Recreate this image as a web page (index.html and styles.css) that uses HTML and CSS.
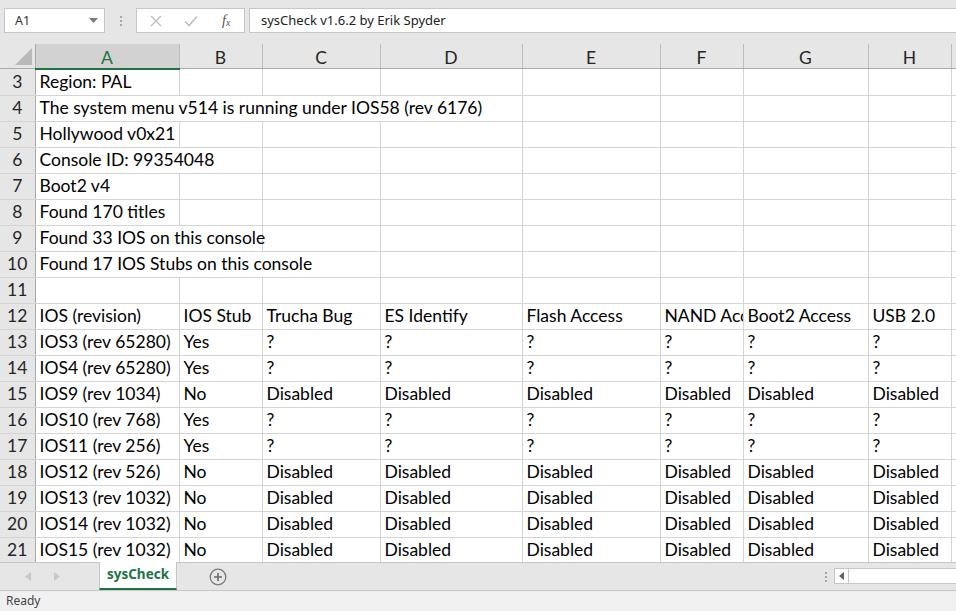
FILE: index.html
```html
<!DOCTYPE html>
<html lang="en">
<head>
  <meta charset="UTF-8" />
  <title>sysCheck - Excel</title>
  <link rel="stylesheet" href="styles.css">
</head>
<body>
  <div class="app">
    <div class="topbar">
      <div class="namebox">
        <span>A1</span>
        <svg class="caret" width="9" height="5" viewBox="0 0 9 5"><path d="M0 0h9L4.5 5z" fill="#7a7a7a"/></svg>
      </div>
      <div class="grip"><i></i><i></i><i></i></div>
      <div class="fxbox">
        <svg width="12" height="12" viewBox="0 0 12 12"><path d="M1 1l10 10M11 1L1 11" stroke="#bdbdbd" stroke-width="1.3" fill="none"/></svg>
        <svg width="14" height="12" viewBox="0 0 14 12"><path d="M1 6.5l4 4L13 1.5" stroke="#bdbdbd" stroke-width="1.6" fill="none"/></svg>
        <span class="fx"><i>f</i><sub>x</sub></span>
      </div>
      <div class="formula">sysCheck v1.6.2 by Erik Spyder</div>
    </div>

    <div class="sheet">
      <table class="grid">
        <colgroup>
          <col style="width:35px"><col style="width:144px"><col style="width:83px"><col style="width:118px">
          <col style="width:142px"><col style="width:138px"><col style="width:83px"><col style="width:125px">
          <col style="width:83px"><col style="width:60px">
        </colgroup>
        <thead>
          <tr>
            <th class="corner"><svg width="17" height="17" viewBox="0 0 17 17"><path d="M17 0v17H0z" fill="#b9b9b9"/></svg></th>
            <th class="sel">A</th><th>B</th><th>C</th><th>D</th><th>E</th><th>F</th><th>G</th><th>H</th><th>I</th>
          </tr>
        </thead>
        <tbody>
          <tr><th>3</th><td>Region: PAL</td><td></td><td></td><td></td><td></td><td></td><td></td><td></td><td></td></tr>
          <tr><th>4</th><td colspan="4">The system menu v514 is running under IOS58 (rev 6176)</td><td></td><td></td><td></td><td></td><td></td></tr>
          <tr><th>5</th><td>Hollywood v0x21</td><td></td><td></td><td></td><td></td><td></td><td></td><td></td><td></td></tr>
          <tr><th>6</th><td colspan="2">Console ID: 99354048</td><td></td><td></td><td></td><td></td><td></td><td></td><td></td></tr>
          <tr><th>7</th><td>Boot2 v4</td><td></td><td></td><td></td><td></td><td></td><td></td><td></td><td></td></tr>
          <tr><th>8</th><td>Found 170 titles</td><td></td><td></td><td></td><td></td><td></td><td></td><td></td><td></td></tr>
          <tr><th>9</th><td colspan="2" class="spill">Found 33 IOS on this console</td><td></td><td></td><td></td><td></td><td></td><td></td><td></td></tr>
          <tr><th>10</th><td colspan="3">Found 17 IOS Stubs on this console</td><td></td><td></td><td></td><td></td><td></td><td></td></tr>
          <tr><th>11</th><td></td><td></td><td></td><td></td><td></td><td></td><td></td><td></td><td></td></tr>
          <tr><th>12</th><td>IOS (revision)</td><td>IOS Stub</td><td>Trucha Bug</td><td>ES Identify</td><td>Flash Access</td><td>NAND Access</td><td>Boot2 Access</td><td>USB 2.0</td><td></td></tr>
          <tr><th>13</th><td>IOS3 (rev 65280)</td><td>Yes</td><td>?</td><td>?</td><td>?</td><td>?</td><td>?</td><td>?</td><td></td></tr>
          <tr><th>14</th><td>IOS4 (rev 65280)</td><td>Yes</td><td>?</td><td>?</td><td>?</td><td>?</td><td>?</td><td>?</td><td></td></tr>
          <tr><th>15</th><td>IOS9 (rev 1034)</td><td>No</td><td>Disabled</td><td>Disabled</td><td>Disabled</td><td>Disabled</td><td>Disabled</td><td>Disabled</td><td></td></tr>
          <tr><th>16</th><td>IOS10 (rev 768)</td><td>Yes</td><td>?</td><td>?</td><td>?</td><td>?</td><td>?</td><td>?</td><td></td></tr>
          <tr><th>17</th><td>IOS11 (rev 256)</td><td>Yes</td><td>?</td><td>?</td><td>?</td><td>?</td><td>?</td><td>?</td><td></td></tr>
          <tr><th>18</th><td>IOS12 (rev 526)</td><td>No</td><td>Disabled</td><td>Disabled</td><td>Disabled</td><td>Disabled</td><td>Disabled</td><td>Disabled</td><td></td></tr>
          <tr><th>19</th><td>IOS13 (rev 1032)</td><td>No</td><td>Disabled</td><td>Disabled</td><td>Disabled</td><td>Disabled</td><td>Disabled</td><td>Disabled</td><td></td></tr>
          <tr><th>20</th><td>IOS14 (rev 1032)</td><td>No</td><td>Disabled</td><td>Disabled</td><td>Disabled</td><td>Disabled</td><td>Disabled</td><td>Disabled</td><td></td></tr>
          <tr><th>21</th><td>IOS15 (rev 1032)</td><td>No</td><td>Disabled</td><td>Disabled</td><td>Disabled</td><td>Disabled</td><td>Disabled</td><td>Disabled</td><td></td></tr>
        </tbody>
      </table>
    </div>

    <div class="tabbar">
      <div class="nav">
        <svg width="6" height="9" viewBox="0 0 6 9"><path d="M6 0v9L0 4.5z" fill="#c8c8c8"/></svg>
        <svg width="6" height="9" viewBox="0 0 6 9"><path d="M0 0v9l6-4.5z" fill="#c8c8c8"/></svg>
      </div>
      <div class="tab">sysCheck</div>
      <div class="addsheet">
        <svg width="18" height="18" viewBox="0 0 18 18"><circle cx="9" cy="9" r="7.8" fill="none" stroke="#7a7a7a" stroke-width="1.3"/><path d="M9 5v8M5 9h8" stroke="#6a6a6a" stroke-width="1.6"/></svg>
      </div>
      <div class="tabspace"></div>
      <div class="grip hgrip"><i></i><i></i><i></i></div>
      <div class="hscroll">
        <div class="hbtn"><svg width="5" height="8" viewBox="0 0 5 8"><path d="M5 0v8L0 4z" fill="#606060"/></svg></div>
      </div>
    </div>

    <div class="statusbar">Ready</div>
  </div>
</body>
</html>
```

FILE: styles.css
```css
body {
  margin: 0;
  background: #fff;
  font-family: 'Noto Sans', 'Open Sans', sans-serif;
  overflow: hidden;
}
.app {
  width: 956px;
  height: 611px;
  display: flex;
  flex-direction: column;
  overflow: hidden;
}
.topbar {
  height: 44px;
  flex: none;
  background: #e6e6e6;
  display: flex;
  align-items: flex-start;
  padding-top: 8px;
  box-sizing: border-box;
}
.namebox {
  margin-left: 4px;
  width: 101px;
  height: 25px;
  box-sizing: border-box;
  background: #fff;
  border: 1px solid #c6c6c6;
  display: flex;
  align-items: center;
  justify-content: space-between;
  padding: 0 6px 0 10px;
  font-size: 12.5px;
  color: #333;
}
.grip {
  width: 31px;
  height: 25px;
  display: flex;
  flex-direction: column;
  align-items: center;
  justify-content: center;
  gap: 2px;
}
.grip i {
  width: 2px;
  height: 2px;
  background: #a8a8a8;
}
.fxbox {
  width: 109px;
  height: 25px;
  box-sizing: border-box;
  background: #fff;
  border: 1px solid #c6c6c6;
  display: flex;
  align-items: center;
  padding: 0 12px 0 13px;
  gap: 22px;
}
.fx {
  font-family: 'Liberation Serif', serif;
  font-size: 14px;
  color: #555;
  margin-left: 2px;
}
.fx sub {
  font-size: 10px;
  font-style: italic;
  vertical-align: -1px;
}
.formula {
  margin-left: 4px;
  flex: 1;
  height: 25px;
  box-sizing: border-box;
  background: #fff;
  border: 1px solid #c6c6c6;
  border-right: none;
  padding-left: 11px;
  font-size: 13px;
  line-height: 23px;
  color: #222;
}

.sheet {
  height: 518px;
  flex: none;
  overflow: hidden;
}
.grid {
  border-collapse: collapse;
  table-layout: fixed;
  width: 1011px;
  font-family: Lato, 'Open Sans', sans-serif;
  font-size: 17.5px;
  color: #000;
}
.grid td, .grid th {
  padding: 0;
  white-space: nowrap;
  overflow: hidden;
}
.grid td {
  height: 22px;
  border-right: 1px solid #d4d4d4;
  border-bottom: 1px solid #d4d4d4;
  vertical-align: bottom;
  padding: 0 0 3px 4px;
  line-height: 20px;
}
.grid td.spill {
  overflow: visible;
}
.grid thead th {
  height: 21px;
  background: #e6e6e6;
  font-weight: normal;
  color: #262626;
  border-right: 1px solid #bcbcbc;
  border-bottom: 1px solid #ababab;
  line-height: 21px;
  vertical-align: bottom;
}
.grid thead th.sel {
  background: #d2d2d2;
  color: #217346;
  border-bottom: 2px solid #217346;
}
.grid thead th.corner {
  text-align: right;
  vertical-align: bottom;
  line-height: 0;
  padding: 0 3px 3px 0;
  border-right: 1px solid #ababab;
}
.grid tbody th {
  background: #e6e6e6;
  font-weight: normal;
  color: #262626;
  text-align: center;
  vertical-align: bottom;
  padding-bottom: 3px;
  line-height: 20px;
  border-right: 1px solid #ababab;
  border-bottom: 1px solid #d4d4d4;
}

.tabbar {
  height: 29px;
  flex: none;
  background: #e6e6e6;
  border-top: 1px solid #c6c6c6;
  border-bottom: 1px solid #c6c6c6;
  display: flex;
  align-items: stretch;
  box-sizing: border-box;
}
.nav {
  width: 99px;
  display: flex;
  align-items: center;
  padding-left: 25px;
  gap: 23px;
  box-sizing: border-box;
}
.tab {
  width: 78px;
  background: #fff;
  color: #217346;
  font-weight: bold;
  font-size: 13.5px;
  text-align: center;
  line-height: 24px;
  border-left: 1px solid #c6c6c6;
  border-right: 1px solid #c6c6c6;
  border-bottom: 2px solid #217346;
  margin-top: -1px;
  box-sizing: border-box;
}
.addsheet {
  width: 82px;
  display: flex;
  align-items: center;
  justify-content: center;
}
.tabspace {
  flex: 1;
}
.hgrip {
  width: 16px;
  height: auto;
}
.hscroll {
  width: 121px;
  margin: 5px 0 6px;
  background: #fff;
  border: 1px solid #c6c6c6;
  border-right: none;
  display: flex;
}
.hbtn {
  width: 13px;
  border-right: 1px solid #c6c6c6;
  display: flex;
  align-items: center;
  justify-content: center;
}
.statusbar {
  flex: 1;
  background: #f0f0f0;
  font-size: 12px;
  color: #444;
  padding-left: 6px;
  line-height: 19px;
}
```
